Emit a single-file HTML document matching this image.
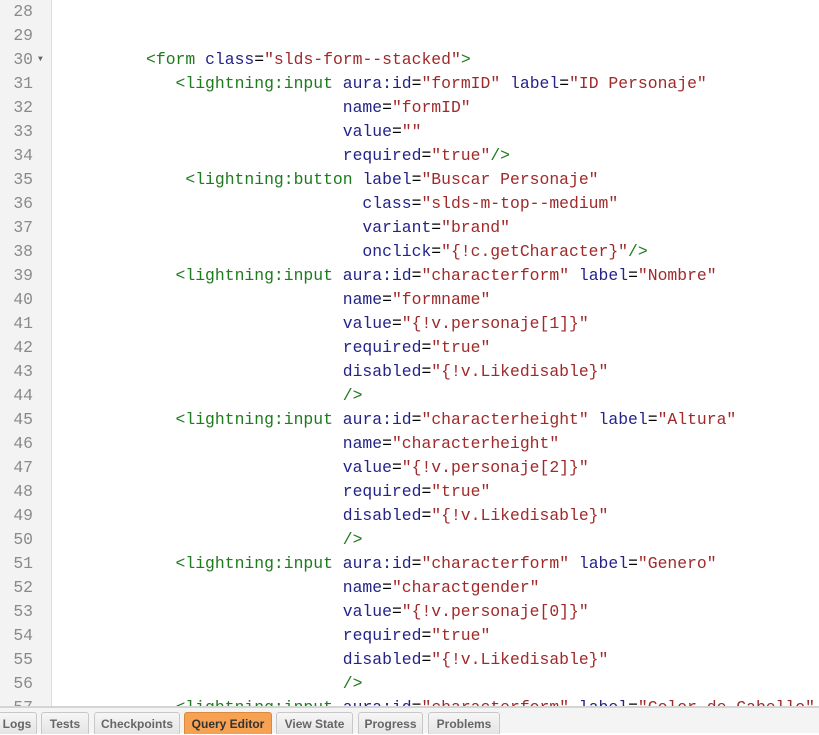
<!DOCTYPE html>
<html><head><style>
body{margin:0;width:819px;height:731px;overflow:hidden;background:#fff;position:relative;font-family:"Liberation Mono",monospace}
.g{position:absolute;left:0;top:0;width:51px;height:731px;background:#f3f3f3;border-right:1px solid #ddd}
.l{position:absolute;left:0;height:24px;line-height:24px;font-size:16.4px;white-space:pre;width:819px}
.n{position:absolute;left:0;width:33px;text-align:right;color:#8a8a8a}
.c{position:absolute;left:57.5px;color:#000}
.t{color:#1d7a1d}.a{color:#23238a}.v{color:#a0292a}
.fold{position:absolute;left:38px;top:0;font-size:8px;color:#666}
.bar{position:absolute;left:0;top:706px;width:819px;height:25px;background:#f4f4f4;border-top:2px solid #d4d4d4}
.tab{position:absolute;top:4px;height:22px;background:linear-gradient(#f6f6f6,#e4e4e4);border:1px solid #c8c8c8;border-bottom:none;border-radius:3px 3px 0 0;font:bold 12px "Liberation Sans",sans-serif;color:#666;text-align:center;line-height:22px;box-sizing:border-box}
.tab.on{background:#f7a252;border-color:#d98a3c;color:#333}
</style></head><body>
<div class="g"></div>
<div class="l" style="top:0"><span class="n">28</span></div>
<div class="l" style="top:24px"><span class="n">29</span></div>
<div class="l" style="top:48px"><span class="n">30</span><span class="fold">▼</span><span class="c">         <span class="t">&lt;form</span> <span class="a">class</span>=<span class="v">"slds-form--stacked"</span><span class="t">&gt;</span></span></div>
<div class="l" style="top:72px"><span class="n">31</span><span class="c">            <span class="t">&lt;lightning:input</span> <span class="a">aura:id</span>=<span class="v">"formID"</span> <span class="a">label</span>=<span class="v">"ID Personaje"</span></span></div>
<div class="l" style="top:96px"><span class="n">32</span><span class="c">                             <span class="a">name</span>=<span class="v">"formID"</span></span></div>
<div class="l" style="top:120px"><span class="n">33</span><span class="c">                             <span class="a">value</span>=<span class="v">""</span></span></div>
<div class="l" style="top:144px"><span class="n">34</span><span class="c">                             <span class="a">required</span>=<span class="v">"true"</span><span class="t">/&gt;</span></span></div>
<div class="l" style="top:168px"><span class="n">35</span><span class="c">             <span class="t">&lt;lightning:button</span> <span class="a">label</span>=<span class="v">"Buscar Personaje"</span></span></div>
<div class="l" style="top:192px"><span class="n">36</span><span class="c">                               <span class="a">class</span>=<span class="v">"slds-m-top--medium"</span></span></div>
<div class="l" style="top:216px"><span class="n">37</span><span class="c">                               <span class="a">variant</span>=<span class="v">"brand"</span></span></div>
<div class="l" style="top:240px"><span class="n">38</span><span class="c">                               <span class="a">onclick</span>=<span class="v">"{!c.getCharacter}"</span><span class="t">/&gt;</span></span></div>
<div class="l" style="top:264px"><span class="n">39</span><span class="c">            <span class="t">&lt;lightning:input</span> <span class="a">aura:id</span>=<span class="v">"characterform"</span> <span class="a">label</span>=<span class="v">"Nombre"</span></span></div>
<div class="l" style="top:288px"><span class="n">40</span><span class="c">                             <span class="a">name</span>=<span class="v">"formname"</span></span></div>
<div class="l" style="top:312px"><span class="n">41</span><span class="c">                             <span class="a">value</span>=<span class="v">"{!v.personaje[1]}"</span></span></div>
<div class="l" style="top:336px"><span class="n">42</span><span class="c">                             <span class="a">required</span>=<span class="v">"true"</span></span></div>
<div class="l" style="top:360px"><span class="n">43</span><span class="c">                             <span class="a">disabled</span>=<span class="v">"{!v.Likedisable}"</span></span></div>
<div class="l" style="top:384px"><span class="n">44</span><span class="c">                             <span class="t">/&gt;</span></span></div>
<div class="l" style="top:408px"><span class="n">45</span><span class="c">            <span class="t">&lt;lightning:input</span> <span class="a">aura:id</span>=<span class="v">"characterheight"</span> <span class="a">label</span>=<span class="v">"Altura"</span></span></div>
<div class="l" style="top:432px"><span class="n">46</span><span class="c">                             <span class="a">name</span>=<span class="v">"characterheight"</span></span></div>
<div class="l" style="top:456px"><span class="n">47</span><span class="c">                             <span class="a">value</span>=<span class="v">"{!v.personaje[2]}"</span></span></div>
<div class="l" style="top:480px"><span class="n">48</span><span class="c">                             <span class="a">required</span>=<span class="v">"true"</span></span></div>
<div class="l" style="top:504px"><span class="n">49</span><span class="c">                             <span class="a">disabled</span>=<span class="v">"{!v.Likedisable}"</span></span></div>
<div class="l" style="top:528px"><span class="n">50</span><span class="c">                             <span class="t">/&gt;</span></span></div>
<div class="l" style="top:552px"><span class="n">51</span><span class="c">            <span class="t">&lt;lightning:input</span> <span class="a">aura:id</span>=<span class="v">"characterform"</span> <span class="a">label</span>=<span class="v">"Genero"</span></span></div>
<div class="l" style="top:576px"><span class="n">52</span><span class="c">                             <span class="a">name</span>=<span class="v">"charactgender"</span></span></div>
<div class="l" style="top:600px"><span class="n">53</span><span class="c">                             <span class="a">value</span>=<span class="v">"{!v.personaje[0]}"</span></span></div>
<div class="l" style="top:624px"><span class="n">54</span><span class="c">                             <span class="a">required</span>=<span class="v">"true"</span></span></div>
<div class="l" style="top:648px"><span class="n">55</span><span class="c">                             <span class="a">disabled</span>=<span class="v">"{!v.Likedisable}"</span></span></div>
<div class="l" style="top:672px"><span class="n">56</span><span class="c">                             <span class="t">/&gt;</span></span></div>
<div class="l" style="top:696px"><span class="n">57</span><span class="c">            <span class="t">&lt;lightning:input</span> <span class="a">aura:id</span>=<span class="v">"characterform"</span> <span class="a">label</span>=<span class="v">"Color de Cabello"</span></span></div>
<div class="bar">
<div class="tab" style="left:-3px;width:40px">Logs</div>
<div class="tab" style="left:41px;width:48px">Tests</div>
<div class="tab" style="left:94px;width:86px">Checkpoints</div>
<div class="tab on" style="left:184px;width:88px">Query Editor</div>
<div class="tab" style="left:276px;width:77px">View State</div>
<div class="tab" style="left:358px;width:65px">Progress</div>
<div class="tab" style="left:428px;width:72px">Problems</div>
</div>
</body></html>
